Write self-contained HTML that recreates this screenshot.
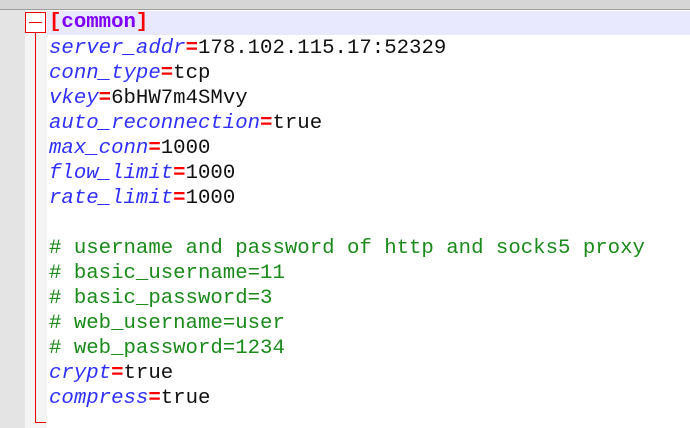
<!DOCTYPE html>
<html><head><style>
body{margin:0;width:690px;height:428px;overflow:hidden;background:#fff;position:relative;font-family:"Liberation Mono",monospace;}
.tab{position:absolute;left:0;top:0;width:690px;height:9px;background:#d6d6d6;border-bottom:1px solid #a0a0a0;}
.g1{position:absolute;left:0;top:10px;width:25px;height:418px;background:#e4e4e4;}
.g2{position:absolute;left:25px;top:10px;width:22px;height:418px;background:#f4f4f4;}
.hl{position:absolute;left:47px;top:11px;width:643px;height:24px;background:#e8e8ff;}
.box{position:absolute;left:25px;top:12px;width:19px;height:19px;border:1px solid #e00;background:#fff;}
.box:after{content:"";position:absolute;left:3px;right:3px;top:9px;height:1px;background:#e00;}
.vl{position:absolute;left:35px;top:32px;width:1px;height:391px;background:#e00;}
.hl2{position:absolute;left:35px;top:422px;width:11px;height:1px;background:#e00;}
.t{position:absolute;left:49px;font-size:20.7px;white-space:pre;line-height:25px;}
.k{color:#3030ff;font-style:italic}
.e{color:#f00;font-weight:bold}
.v{color:#111}
.c{color:#1a8a1a}
.s{color:#8000ff;font-weight:bold}
.b{color:#f00;font-weight:bold}
</style></head><body>
<div class="tab"></div>
<div class="g1"></div><div class="g2"></div>
<div class="hl"></div>
<div class="box"></div><div class="vl"></div><div class="hl2"></div>
<div class="t" style="top:10px"><span class="b">[</span><span class="s">common</span><span class="b">]</span></div>
<div class="t" style="top:36px"><span class="k">server_addr</span><span class="e">=</span><span class="v">178.102.115.17:52329</span></div>
<div class="t" style="top:61px"><span class="k">conn_type</span><span class="e">=</span><span class="v">tcp</span></div>
<div class="t" style="top:86px"><span class="k">vkey</span><span class="e">=</span><span class="v">6bHW7m4SMvy</span></div>
<div class="t" style="top:111px"><span class="k">auto_reconnection</span><span class="e">=</span><span class="v">true</span></div>
<div class="t" style="top:136px"><span class="k">max_conn</span><span class="e">=</span><span class="v">1000</span></div>
<div class="t" style="top:161px"><span class="k">flow_limit</span><span class="e">=</span><span class="v">1000</span></div>
<div class="t" style="top:186px"><span class="k">rate_limit</span><span class="e">=</span><span class="v">1000</span></div>
<div class="t c" style="top:236px"># username and password of http and socks5 proxy</div>
<div class="t c" style="top:261px"># basic_username=11</div>
<div class="t c" style="top:286px"># basic_password=3</div>
<div class="t c" style="top:311px"># web_username=user</div>
<div class="t c" style="top:336px"># web_password=1234</div>
<div class="t" style="top:361px"><span class="k">crypt</span><span class="e">=</span><span class="v">true</span></div>
<div class="t" style="top:386px"><span class="k">compress</span><span class="e">=</span><span class="v">true</span></div>
</body></html>
